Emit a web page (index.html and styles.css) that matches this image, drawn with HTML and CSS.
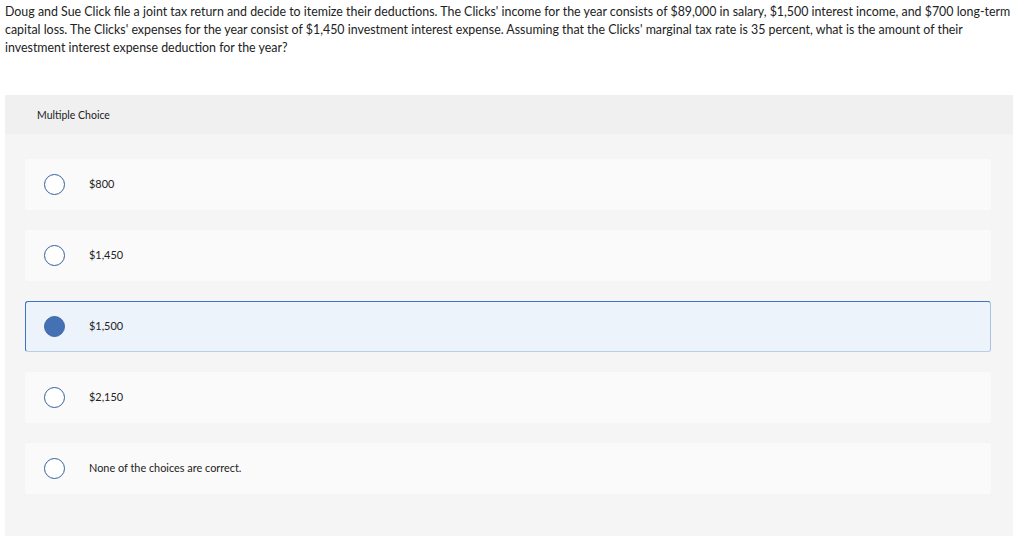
FILE: index.html
```html
<!DOCTYPE html>
<html>
<head>
<meta charset="utf-8">
<link rel="stylesheet" href="styles.css">
</head>
<body>
<div class="page">
  <p class="question">Doug and Sue Click file a joint tax return and decide to itemize their deductions. The Clicks' income for the year consists of $89,000 in salary, $1,500 interest income, and $700 long-term capital loss. The Clicks' expenses for the year consist of $1,450 investment interest expense. Assuming that the Clicks' marginal tax rate is 35 percent, what is the amount of their investment interest expense deduction for the year?</p>
  <div class="panel">
    <div class="panel-header">Multiple Choice</div>
    <div class="choices">
      <div class="choice"><span class="radio"></span><span class="label">$800</span></div>
      <div class="choice"><span class="radio"></span><span class="label">$1,450</span></div>
      <div class="choice selected"><span class="radio"></span><span class="label">$1,500</span></div>
      <div class="choice"><span class="radio"></span><span class="label">$2,150</span></div>
      <div class="choice"><span class="radio"></span><span class="label">None of the choices are correct.</span></div>
    </div>
  </div>
</div>
</body>
</html>
```
FILE: styles.css
```css
html, body {
  margin: 0;
  padding: 0;
  background: #ffffff;
}
body {
  font-family: "Lato", "Liberation Sans", sans-serif;
  color: #1f1f1f;
}
.page {
  padding: 3px 11px 0 5px;
}
.question {
  margin: 0;
  font-size: 12.4px;
  line-height: 18px;
  color: #222;
}
.panel {
  margin-top: 38px;
  background: #f5f5f5;
  height: 441px;
}
.panel-header {
  background: #f0f0f0;
  height: 39px;
  display: flex;
  align-items: center;
  padding-left: 32px;
  font-size: 10.5px;
  color: #222;
}
.choices {
  display: flex;
  flex-direction: column;
  gap: 20px;
  padding: 25px 22px 0 20px;
}
.choice {
  height: 51px;
  background: #fafafa;
  border-radius: 3px;
  display: flex;
  align-items: center;
  padding-left: 19px;
  box-sizing: border-box;
}
.choice.selected {
  background: #edf3fa;
  border: 1px solid #3f72c0;
  border-right-color: #a9c1e4;
  border-bottom-color: #b9cce8;
  padding-left: 18px;
}
.radio {
  width: 19px;
  height: 19px;
  border: 1.5px solid #35609e;
  border-radius: 50%;
  background: #fff;
  flex: none;
}
.selected .radio {
  background: #4471b3;
  border-color: #3c68a8;
}
.label {
  margin-left: 24px;
  font-size: 10.9px;
  line-height: 14px;
  margin-top: -1px;
  color: #222;
}
```
